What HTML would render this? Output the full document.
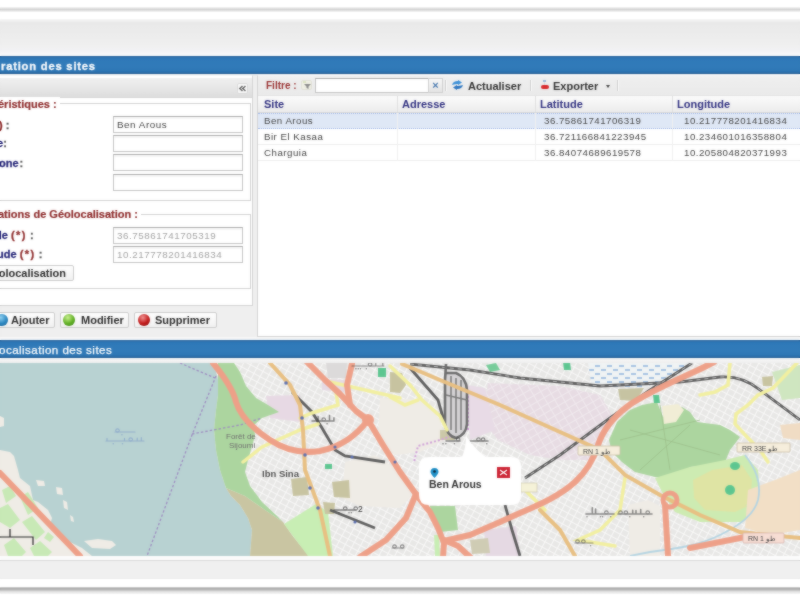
<!DOCTYPE html>
<html><head><meta charset="utf-8">
<style>
*{margin:0;padding:0;box-sizing:border-box}
html,body{width:800px;height:600px;overflow:hidden;background:#fff;font-family:"Liberation Sans",sans-serif;font-size:11px;color:#222}
#root,#root2{position:absolute;left:0;top:0;width:800px;height:600px;overflow:hidden;will-change:transform}
#root2{filter:blur(0.8px);opacity:0.5}
.a{position:absolute;white-space:nowrap}
#topline{left:0;top:7px;width:800px;height:5px;background:linear-gradient(#fbfbfb,#d2d2d2 50%,#fbfbfb)}
#band{left:0;top:19px;width:800px;height:36px;background:linear-gradient(#fbfbfb,#e9e9e9 9%,#ebebeb 30%,#efefef 70%,#f2f2f4 88%,#f8f8fa)}
#win{left:0;top:74px;width:800px;height:266px;background:#efefef}
.bluebar{left:0;width:800px;height:18px;background:linear-gradient(#245f98,#2f79b8 14%,#327bb9 55%,#2e77b5 85%,#205a92);color:#fff}
#t1{top:56px}
#t2{top:340px}
#lp{left:-2px;top:75px;width:255px;height:231px;border:1px solid #d3d3d3;border-top-color:#fbfbfb;background:#fff}
#lph{left:0;top:78px;width:252px;height:20px;background:linear-gradient(#f0f0f0,#e8e8e8 45%,#dddddd);border-bottom:1px solid #d6d6d6}
#coll{left:237px;top:83px;width:11px;height:11px;background:#fafafa;border:1px solid #dadada;border-radius:2px;font-size:11px;font-weight:bold;line-height:9px;text-align:center;color:#666;letter-spacing:-1px}
.fs{border:1px solid #d2d2d2;border-left:none}
.leg{font-weight:bold;color:#8e2c2c;-webkit-text-stroke:0.2px #8e2c2c;background:#fff;padding-right:3px;line-height:14px}
.lbl{font-weight:bold;color:#262678;line-height:14px;-webkit-text-stroke:0.3px currentColor}
.red{color:#8e2c2c}
.col{color:#555}
.inp{left:113px;width:130px;height:17px;border:1px solid #c4c4c4;border-top-color:#acacac;background:linear-gradient(#f4f4f4,#fff 3px);padding-left:3px;font-size:9.8px;letter-spacing:0.55px;line-height:15px;color:#444}
.dis{color:#a2a2a2}
.btn{height:16px;border:1px solid #cccccc;background:linear-gradient(#fefefe,#f1f1f1);border-radius:2px;font-weight:bold;color:#2e2e2e;font-size:11px;line-height:14px}
.ico{position:absolute;border-radius:50%;width:12px;height:12px}
#rp{left:257px;top:75px;width:545px;height:262px;border:1px solid #d3d3d3;border-top-color:#fbfbfb;background:#fff}
#tb{left:258px;top:76px;width:542px;height:19px;background:linear-gradient(#efefef,#eaeaea)}
#gh{left:258px;top:95px;width:542px;height:18px;background:linear-gradient(#fbfbfb,#ececec);border-bottom:1px solid #d8d8d8;border-top:1px solid #e4e4e4}
.gc{top:96px;height:16px;font-weight:bold;color:#303080;line-height:16px}
.sep{top:96px;width:1px;height:16px;background:#e0e0e0}
.row{left:258px;width:542px;height:16px;border-bottom:1px solid #ededed}
.sel{background:#dfe8f6;border-top:1px dotted #a3bae9;border-bottom:1px dotted #a3bae9}
.cell{color:#444;line-height:14px;font-size:9.7px;letter-spacing:0.5px}
.tsep{top:80px;width:2px;height:11px;border-left:1px solid #d0d0d0;border-right:1px solid #fafafa}
.tbt{top:79px;font-weight:bold;color:#333;line-height:14px}
</style></head><body><div id="root">
<div id="topline" class="a"></div>
<div id="band" class="a"></div>
<div class="a" style="left:0;top:54px;width:800px;height:2px;background:#fbfbfb"></div>
<div id="win" class="a"></div>
<div id="t1" class="a bluebar"><span class="a" style="left:1px;top:0.5px;font-weight:bold;font-size:11.2px;letter-spacing:0.8px;line-height:18px;-webkit-text-stroke:0.3px #fff">ration des sites</span></div>

<!-- left panel -->
<div id="lp" class="a"></div>
<div id="lph" class="a"></div>
<div id="coll" class="a"><svg width="9" height="9" style="position:absolute;left:0;top:0"><path d="M4.5,2 L1.8,4.5 L4.5,7 M7.5,2 L4.8,4.5 L7.5,7" fill="none" stroke="#6a6a6a" stroke-width="1.5"/></svg></div>

<div class="a fs" style="left:-2px;top:103px;width:253px;height:98px"></div>
<div class="a leg" style="left:-2px;top:97px">éristiques :</div>
<div class="a lbl" style="left:-1px;top:118px"><span class="red">)</span> <span class="col">:</span></div>
<div class="a lbl" style="left:-3px;top:136px">e<span class="col">:</span></div>
<div class="a lbl" style="left:-1px;top:156px">one<span class="col" style="padding-left:1px">:</span></div>
<div class="a inp" style="top:116px">Ben Arous</div>
<div class="a inp" style="top:135px"></div>
<div class="a inp" style="top:154px"></div>
<div class="a inp" style="top:174px"></div>

<div class="a fs" style="left:-2px;top:214px;width:253px;height:75px"></div>
<div class="a leg" style="left:-2px;top:207px">ations de Géolocalisation :</div>
<div class="a lbl" style="left:-5px;top:228px">de <span class="red" style="letter-spacing:1.5px">(*)</span> <span class="col">:</span></div>
<div class="a lbl" style="left:-3px;top:247px">ude <span class="red" style="letter-spacing:1.5px">(*)</span> <span class="col">:</span></div>
<div class="a inp dis" style="top:227px">36.75861741705319</div>
<div class="a inp dis" style="top:246px">10.217778201416834</div>
<div class="a btn" style="left:-20px;top:265px;width:94px;padding-left:3px;font-size:11px">Géolocalisation</div>

<div class="a btn" style="left:-10px;top:312px;width:65px;padding-left:20px">Ajouter<span class="ico" style="left:5px;top:1px;background:radial-gradient(circle at 40% 30%,#8fd0f0,#2a86c0 55%,#155a8a)"></span></div>
<div class="a btn" style="left:60px;top:312px;width:69px;padding-left:20px">Modifier<span class="ico" style="left:2px;top:1px;background:radial-gradient(circle at 40% 30%,#c8f090,#5fae22 55%,#2f7a10)"></span></div>
<div class="a btn" style="left:134px;top:312px;width:83px;padding-left:20px">Supprimer<span class="ico" style="left:3px;top:1px;background:radial-gradient(circle at 40% 30%,#f09090,#c01818 55%,#7a0808)"></span></div>

<!-- right panel -->
<div id="rp" class="a"></div>
<div id="tb" class="a"></div>
<div class="a" style="left:266px;top:79px;font-weight:bold;font-size:10px;color:#9a3333;line-height:14px">Filtre :</div>
<div class="a" style="left:301px;top:80px;width:11px;height:10px;background:#efefe4;border:1px solid #e2e2d8;border-radius:2px"><svg width="11" height="10" style="position:absolute;left:-1px;top:-1px"><path d="M3,4 L10,4 L7.5,6.5 L7.5,9 L5.5,8 L5.5,6.5 Z" fill="#8a8a8a"/><path d="M2,2 L5,2" stroke="#c8d8a0" stroke-width="1"/></svg></div>
<div class="a inp" style="left:315px;top:78px;width:114px;height:15px;background:#fff"></div>
<div class="a" style="left:428px;top:78px;width:15px;height:15px;background:linear-gradient(#f8f8f8,#e4e4e4);border:1px solid #cfcfcf;color:#4a7ab0;font-size:11px;line-height:12px;text-align:center;font-weight:bold">×</div>
<div class="a tsep" style="left:445px"></div>
<div class="a" style="left:451px;top:80px;width:13px;height:10px"><svg width="13" height="10"><path d="M1,5 Q2,1 7,1 L7,0 L11,2.5 L7,5 L7,4 Q4,4 1,5Z" fill="#3b8fd8"/><path d="M12,5 Q11,9 6,9 L6,10 L2,7.5 L6,5 L6,6 Q9,6 12,5Z" fill="#2a74c0"/></svg></div>
<div class="a tbt" style="left:468px">Actualiser</div>
<div class="a tsep" style="left:530px"></div>
<div class="a" style="left:540px;top:80px;width:9px;height:10px"><div class="a" style="left:3px;top:0;width:3px;height:2px;background:#9ab8d8"></div><div class="a" style="left:4px;top:2px;width:1px;height:3px;background:#ddd"></div><div class="a" style="left:1px;top:5px;width:8px;height:4px;background:#d8282a;border-radius:4px"></div></div>
<div class="a tbt" style="left:553px">Exporter</div>
<div class="a" style="left:606px;top:85px;width:0;height:0;border-left:2.5px solid transparent;border-right:2.5px solid transparent;border-top:3px solid #444"></div>
<div class="a tsep" style="left:617px"></div>

<div id="gh" class="a"></div>
<div class="a gc" style="left:264px">Site</div>
<div class="a sep" style="left:397px"></div>
<div class="a gc" style="left:402px">Adresse</div>
<div class="a sep" style="left:535px"></div>
<div class="a gc" style="left:540px">Latitude</div>
<div class="a sep" style="left:672px"></div>
<div class="a gc" style="left:677px">Longitude</div>

<div class="a row sel" style="top:113px"></div>
<div class="a row" style="top:129px"></div>
<div class="a row" style="top:145px"></div>
<div class="a" style="left:397px;top:113px;width:1px;height:48px;background:#f0f0f0"></div>
<div class="a" style="left:535px;top:113px;width:1px;height:48px;background:#f0f0f0"></div>
<div class="a" style="left:672px;top:113px;width:1px;height:48px;background:#f0f0f0"></div>
<div class="a cell" style="left:264px;top:114px">Ben Arous</div>
<div class="a cell" style="left:544px;top:114px">36.75861741706319</div>
<div class="a cell" style="left:684px;top:114px">10.217778201416834</div>
<div class="a cell" style="left:264px;top:130px">Bir El Kasaa</div>
<div class="a cell" style="left:544px;top:130px">36.721166841223945</div>
<div class="a cell" style="left:684px;top:130px">10.234601016358804</div>
<div class="a cell" style="left:264px;top:146px">Charguia</div>
<div class="a cell" style="left:544px;top:146px">36.84074689619578</div>
<div class="a cell" style="left:684px;top:146px">10.205804820371993</div>

<!-- map -->
<div class="a" style="left:0;top:337px;width:800px;height:3px;background:linear-gradient(#f4f4f4,#fcfcfc)"></div>
<div id="t2" class="a bluebar"><span class="a" style="left:-1px;top:1px;font-size:11.6px;letter-spacing:0.45px;line-height:18px;-webkit-text-stroke:0.25px #fff">ocalisation des sites</span></div>
<div class="a" style="left:0;top:358px;width:800px;height:5px;background:linear-gradient(#f7f7f7,#eeeeee)"></div>
<div id="map" class="a" style="left:0;top:363px;width:800px;height:193px;background:#ebe7e0;overflow:hidden"><svg width="800" height="193" viewBox="0 363 800 193" style="position:absolute;left:0;top:0">
<defs>
<pattern id="grid" patternUnits="userSpaceOnUse" width="7" height="6" patternTransform="rotate(28)">
<rect width="7" height="6" fill="#e8e7e6"/>
<path d="M0 0.5H7M0.5 0V6" stroke="#f8f8f7" stroke-width="1"/>
</pattern>
<pattern id="grid2" patternUnits="userSpaceOnUse" width="8" height="7" patternTransform="rotate(-30)">
<rect width="8" height="7" fill="#e7dce3"/>
<path d="M0 0.5H8M0.5 0V7" stroke="#f0e9ee" stroke-width="1"/>
</pattern>
<pattern id="marsh" patternUnits="userSpaceOnUse" width="12" height="8">
<rect width="12" height="8" fill="#f0f3f4"/>
<path d="M1,2H6M7,6H12" stroke="#8cb2dc" stroke-width="1.5"/>
</pattern>
</defs>
<!-- base residential -->
<rect x="0" y="363" width="800" height="193" fill="url(#grid)"/>
<!-- open land -->
<path fill="#efece6" d="M345,462 L375,455 L395,468 L412,495 L400,508 L360,506 L342,498 Z"/>
<path fill="#efece6" d="M380,398 L425,400 L440,420 L445,440 L420,452 L395,455 L378,440 Z"/>
<path fill="#efece6" d="M628,505 L648,500 L660,506 L660,556 L630,556 Z"/>

<path fill="#efece6" d="M0,440 L30,440 L70,500 L130,540 L130,556 L0,556 Z"/>
<!-- lavender -->
<path fill="url(#grid2)" d="M488,383 L560,386 L600,395 L615,420 L590,460 L560,460 L530,455 L498,440 L482,420 Z"/>
<path fill="#e7d9e4" d="M266,396 L300,395 L302,422 L270,418 Z"/>
<path fill="#e8dbe6" d="M467,385 L485,388 L495,430 L470,440 Z"/>
<path fill="#e5d9e3" d="M484,530 L516,526 L520,556 L486,556 Z"/><path fill="#cfccb4" d="M470,540 L488,538 L490,553 L472,554 Z"/><path fill="#acd59f" d="M430,506 L455,506 L458,530 L440,532 L432,520 Z"/><path fill="#c8eeb4" d="M434,535 L439,535 L440,556 L435,556 Z"/>
<path fill="#dcdada" d="M326,363 L347,363 L346,378 L328,378 Z"/><path fill="#e6dae4" d="M322,379 L345,380 L344,392 L322,390 Z"/>
<path fill="#e5e0e6" d="M700,485 L740,490 L735,515 L700,515 Z"/>
<!-- marsh pattern -->
<path fill="url(#marsh)" d="M588,363 L692,363 L662,380 L646,387 L592,387 Z"/><path fill="#c6c3a2" d="M618,389 L644,388 L636,401 L620,400 Z"/><path fill="#5cc690" d="M563,362 L570,362 L571,370 L564,370 Z"/>
<!-- water -->
<path fill="#b8d2d2" d="M0,363 L214,363 L218,380 L218,395 L216,410 L214,430 L216,450 L220,470 L226,488 L231,496 L240,505 L248,518 L252,530 L250,556 L92,556 L82,548 L70,542 L58,537 L54,532 L50,525 L52,518 L48,510 L38,502 L33,500 L30,486 L20,478 L18,470 L14,456 L10,452 L0,450 Z"/>
<path fill="#efece6" d="M0,416 L4,418 L4,426 L0,427 Z"/>
<path fill="#efece6" d="M84,541 L98,539 L112,541 L116,545 L110,549 L92,548 Z"/>
<path fill="#efece6" d="M36,480 L44,481 L45,486 L38,486 Z"/>
<path fill="#efece6" d="M56,487 L62,488 L63,495 L57,494 Z"/>
<path fill="#efece6" d="M63,500 L67,502 L68,510 L64,508 Z"/>
<path fill="#efece6" d="M70,515 L73,517 L74,522 L71,521 Z"/>
<!-- khaki -->
<path fill="#c9c5a2" d="M226,488 L245,496 L265,510 L283,522 L292,535 L300,545 L310,556 L250,556 L252,530 L248,518 L240,505 L231,496 Z"/>
<path fill="#c7c3a0" d="M390,372 L402,373 L406,385 L400,393 L390,392 Z"/>
<path fill="#c8c4a1" d="M291,479 L307,477 L309,495 L293,496 Z"/>
<path fill="#c8c4a1" d="M332,482 L349,480 L350,498 L334,497 Z"/><path fill="#5cc690" d="M325,464 L332,464 L332,469 L325,469 Z"/>
<path fill="#cbc8a8" d="M440,430 L455,430 L455,440 L440,440 Z"/>
<!-- forest -->
<path fill="#acd59f" d="M218,363 L234,363 L240,372 L246,386 L256,398 L268,405 L279,412 L262,418 L254,425 L255,436 L248,460 L245,472 L250,486 L262,502 L276,515 L283,522 L265,510 L245,496 L226,488 L220,470 L216,450 L214,430 L216,410 L218,395 Z"/>
<path fill="#acd59f" d="M609,440 L617,422 L630,410 L642,405 L657,402 L663,417 L682,407 L690,412 L697,422 L720,425 L730,430 L740,437 L730,450 L725,462 L710,465 L690,467 L675,477 L655,477 L635,472 L622,462 L612,452 Z"/>
<g stroke="#9cbf8a" stroke-width="0.8" fill="none"><path d="M620,440 L700,420 M640,470 L690,425 M630,430 L720,455 M660,405 L670,470"/></g>
<path fill="#f1edd6" d="M662,406 L678,404 L684,410 L676,422 L664,424 Z"/>
<!-- light green park -->
<path fill="#cdebb2" d="M655,478 L690,467 L725,460 L745,455 L758,470 L760,495 L755,515 L740,522 L700,522 L675,512 L662,492 Z"/>
<path fill="#dfe4a4" d="M693,480 L712,470 L742,465 L752,480 L750,505 L735,512 L705,510 L694,498 Z"/>
<ellipse cx="735" cy="466" rx="5" ry="4" fill="#5cc690"/>
<ellipse cx="730" cy="490" rx="5" ry="5" fill="#5cc690"/>
<path fill="#c8eeb4" d="M284,524 L316,504 L328,512 L333,556 L308,556 Z"/><path fill="#c8c4a1" d="M323,502 L335,503 L334,514 L325,514 Z"/>
<path fill="#c8e9b6" d="M2,490 L10,486 L16,496 L6,503 Z M20,497 L28,492 L38,508 L28,515 Z M0,508 L8,504 L20,520 L10,528 L0,522 Z M22,522 L32,516 L45,532 L36,540 Z M4,545 L14,538 L26,552 L22,556 L8,556 Z M30,548 L40,541 L52,552 L48,556 L34,556 Z M48,532 L54,537 L50,542 L44,538 Z"/>
<path fill="#c6e8b2" d="M745,505 L800,480 L800,520 L760,525 Z" opacity="0.5"/>
<path fill="#f2dfc6" d="M748,490 L775,480 L800,470 L800,530 L770,535 L745,528 Z"/>
<path fill="#f0dcc4" d="M780,425 L800,423 L800,440 L783,438 Z"/><path fill="#cfe6c0" d="M772,372 L800,365 L800,398 L782,400 Z"/><path fill="#c8c4a0" d="M762,377 L773,376 L772,386 L763,386 Z"/>
<path fill="#5cc690" d="M378,368 L386,368 L386,377 L378,377 Z"/>
<path fill="#5cc690" d="M653,395 L659,395 L660,403 L654,403 Z"/>
<path fill="#77cc99" d="M486,365 L496,363 L500,370 L490,372 Z"/>
<!-- river -->
<path fill="none" stroke="#b4d4e2" stroke-width="1.8" d="M745,455 C755,468 762,482 758,500 C754,515 740,525 720,535 C700,545 680,548 650,552 L630,556"/>

<!-- purple boundaries -->
<g fill="none" stroke="#9d8cc0" stroke-width="1.3" stroke-dasharray="2.5,2">
<path d="M180,363 L215,378 M216,376 L192,435 L147,556 M192,434 L240,425 L262,418"/>
</g>
<path fill="none" stroke="#d0a0d8" stroke-width="2" stroke-dasharray="2,2" d="M468,392 L468,430 L440,440 L418,446 L414,462"/>
<!-- railways -->
<g fill="none" stroke="#5e5e5e" stroke-width="2.8">
<path d="M410,364 L470,370 L520,378 L600,386 L680,382 L720,377 C735,376 748,380 760,390 L800,420"/>

<path d="M410,368 L438,400 L446,428"/>
<path d="M692,363 L650,390 L610,418 L560,455 L525,478"/>
<path d="M505,505 L512,530 L520,556"/>
<path d="M292,392 L312,412 L322,428 L335,450 L345,456 L385,462"/>
<path d="M330,510 L375,528"/>

</g>
<g fill="none" stroke="#b8b8b8" stroke-width="0.9" stroke-dasharray="4,4">
<path d="M410,364 L470,370 L520,378 L600,386 L680,382 L720,377 C735,376 748,380 760,390 L800,420"/>
<path d="M692,363 L650,390 L610,418 L560,455 L525,478"/>
</g>
<path d="M446,364 L445,380 L445,424 Q447,436 456,438 Q466,435 467,424 L467,390 Q466,377 456,373 L446,373" fill="#d6d4d6" stroke="#6c6c6c" stroke-width="2.6"/>
<path d="M451,376 L451,430 M456,378 L456,433 M461,380 L461,430 M446,395 L467,400" fill="none" stroke="#7c7c7c" stroke-width="1.6"/>
<!-- yellow roads -->
<g fill="none" stroke="#f2efa0" stroke-width="3.5" stroke-linecap="round">
<path d="M243,462 L262,447 L300,430 L318,424"/>
<path d="M330,382 L400,398"/>
<path d="M318,372 L336,392 L338,405 L312,413 L300,418"/>
<path d="M390,366 L410,385 L422,400 L440,416 L447,430"/>
<path d="M390,397 L405,405 L418,400"/>
<path d="M730,363 L728,385 L715,392 L700,395"/>
<path d="M797,363 L773,388 L758,395 L748,405 L736,414 L735,424 L747,437 L760,450 L768,462"/>
<path d="M525,490 L545,510"/>
<path d="M625,478 L620,510 L600,530 L578,540 L615,546"/>

</g>
<!-- tan roads -->
<g fill="none" stroke="#e8bf82" stroke-width="4" stroke-linecap="round">
<path d="M402,364 L440,380 L500,405 L560,432 L600,450 L625,475 L660,495 L700,515 L740,532 L800,538"/>
<path d="M270,363 L290,385 L300,405 L303,430 L305,470 L320,510 L330,556"/>
<path d="M540,510 L560,530 L575,556"/>
</g>
<!-- salmon roads -->
<g fill="none" stroke="#eea088" stroke-width="6" stroke-linecap="round" stroke-linejoin="round">
<path d="M213,363 C222,374 233,388 236,402 C240,416 252,428 270,440 C285,450 300,454 320,451 C340,447 356,436 368,420"/>
<path d="M307,362 L325,380 L340,394 L356,411 L368,420"/>
<path d="M352,364 L347,385 L350,405"/>
<path d="M368,420 L383,445 L400,472 L418,497 L430,512 L438,528 L444,543 L443,557"/>
<path d="M444,540 L458,546 L470,557"/>
<path d="M416,494 L406,518 L386,540 L360,557"/>
<path d="M444,541 L470,535 L500,522 C530,508 555,500 575,482 C590,468 595,455 598,445 C603,430 612,418 628,406 C650,390 690,375 714,362"/>
<path d="M665,505 L668,556"/>
<path d="M690,548 L745,537"/>
<path d="M0,473 L80,556"/>
</g>
<circle cx="368" cy="420" r="6" fill="#eea088"/>
<circle cx="670" cy="500" r="7" fill="none" stroke="#eea088" stroke-width="5"/>
<!-- blue stops -->
<g fill="#5a6fb0">
<circle cx="286" cy="383" r="1.8"/><circle cx="302" cy="418" r="1.8"/><circle cx="305" cy="455" r="1.8"/><circle cx="310" cy="488" r="1.8"/><circle cx="318" cy="508" r="1.8"/>
<circle cx="335" cy="447" r="1.6"/><circle cx="352" cy="457" r="1.6"/><circle cx="355" cy="522" r="1.6"/><circle cx="395" cy="462" r="1.6"/>
</g>
<!-- scale bar -->
<path d="M0,537 L33,537 L33,545 M10,529 L10,537" fill="none" stroke="#222" stroke-width="1.2"/>
<!-- labels -->
<text x="226" y="439" font-family="Liberation Sans" font-size="8" fill="#707070">Forêt de</text>
<text x="229" y="448" font-family="Liberation Sans" font-size="8" fill="#707070">Sijoumi</text>
<text x="262" y="477" font-family="Liberation Sans" font-size="9.5" font-weight="bold" fill="#555">Ibn Sina</text>
<g fill="#f6eedc" stroke="#cbbfa6" stroke-width="0.8">
<rect x="578" y="446" width="42" height="9" rx="1"/>
<rect x="737" y="443" width="53" height="9" rx="1"/>
</g>
<rect x="743" y="533" width="41" height="10" rx="1" fill="#f7ddd4" stroke="#d8b8b0" stroke-width="0.8"/>
<rect x="521" y="483" width="16" height="9" fill="#f5f2d8" stroke="#c8c4a8" stroke-width="0.6"/>
<g font-family="Liberation Sans" font-size="7" fill="#444">
<text x="583" y="453.5">RN 1 طو</text>
<text x="742" y="450.5">RR 33E طو</text>
<text x="748" y="541">RN 1 طو</text>
</g>
<!-- arabic -->
<g opacity="0.6"><path d="M115,432 L135,432" stroke="#7a98c8" stroke-width="1.2" fill="none" stroke-linecap="round"/><ellipse cx="117.5" cy="430.5" rx="1.8" ry="1.6" fill="none" stroke="#7a98c8" stroke-width="1.1"/><circle cx="121.9" cy="434.8" r="0.8" fill="#7a98c8"/></g>
<g opacity="0.6"><path d="M106,441 L144,441 M107.0,441 L107.0,438.4 M124.5,441 L124.5,438.4 M137.2,441 L137.2,438.2 M141.3,441 L141.3,437.6" stroke="#7a98c8" stroke-width="1.2" fill="none" stroke-linecap="round"/><circle cx="113.3" cy="443.8" r="0.8" fill="#7a98c8"/><circle cx="122.5" cy="443.8" r="0.8" fill="#7a98c8"/><ellipse cx="130.7" cy="439.5" rx="1.8" ry="1.6" fill="none" stroke="#7a98c8" stroke-width="1.1"/></g>
<g opacity="0.6"><path d="M312,421.0 L334,421.0 M318.1,421.0 L318.1,416.5 M329.5,421.0 L329.5,415.6 M333.9,421.0 L333.9,417.8" stroke="#3a3a3a" stroke-width="1.5" fill="none" stroke-linecap="round"/><ellipse cx="323.7" cy="419.5" rx="1.8" ry="1.6" fill="none" stroke="#3a3a3a" stroke-width="1.1"/><circle cx="327.1" cy="423.8" r="0.8" fill="#3a3a3a"/></g>
<g opacity="0.6"><path d="M446,441.0 L460,441.0" stroke="#333" stroke-width="1.5" fill="none" stroke-linecap="round"/><circle cx="443.0" cy="443.8" r="0.8" fill="#333"/><circle cx="445.9" cy="443.8" r="0.8" fill="#333"/><circle cx="454.4" cy="443.8" r="0.8" fill="#333"/><ellipse cx="458.1" cy="439.5" rx="1.8" ry="1.6" fill="none" stroke="#333" stroke-width="1.1"/></g>
<g opacity="0.6"><path d="M470,441.0 L488,441.0" stroke="#333" stroke-width="1.5" fill="none" stroke-linecap="round"/><circle cx="471.0" cy="443.8" r="0.8" fill="#333"/><ellipse cx="478.5" cy="439.5" rx="1.8" ry="1.6" fill="none" stroke="#333" stroke-width="1.1"/><ellipse cx="483.1" cy="439.5" rx="1.8" ry="1.6" fill="none" stroke="#333" stroke-width="1.1"/><circle cx="486.8" cy="443.8" r="0.8" fill="#333"/></g>
<g opacity="0.6"><path d="M334,510 L356,510" stroke="#333" stroke-width="1.5" fill="none" stroke-linecap="round"/><circle cx="338.9" cy="512.8" r="0.8" fill="#333"/><ellipse cx="345.2" cy="508.5" rx="1.8" ry="1.6" fill="none" stroke="#333" stroke-width="1.1"/><circle cx="349.0" cy="512.8" r="0.8" fill="#333"/><circle cx="351.3" cy="512.8" r="0.8" fill="#333"/><ellipse cx="355.7" cy="508.5" rx="1.8" ry="1.6" fill="none" stroke="#333" stroke-width="1.1"/></g>
<text x="358" y="512" font-family="Liberation Sans" font-size="8.5" fill="#333">2</text>
<g opacity="0.6"><path d="M586,514 L614,514 M592.3,514 L592.3,507.8 M595.6,514 L595.6,509.1" stroke="#444" stroke-width="1.6" fill="none" stroke-linecap="round"/><circle cx="587.0" cy="516.8" r="0.8" fill="#444"/><circle cx="600.4" cy="516.8" r="0.8" fill="#444"/><circle cx="602.5" cy="516.8" r="0.8" fill="#444"/><ellipse cx="606.4" cy="512.5" rx="1.8" ry="1.6" fill="none" stroke="#444" stroke-width="1.1"/><circle cx="610.7" cy="516.8" r="0.8" fill="#444"/></g>
<g opacity="0.6"><path d="M618,514 L652,514 M632.7,514 L632.7,510.2 M636.0,514 L636.0,510.5 M640.7,514 L640.7,509.6" stroke="#444" stroke-width="1.6" fill="none" stroke-linecap="round"/><ellipse cx="620.5" cy="512.5" rx="1.8" ry="1.6" fill="none" stroke="#444" stroke-width="1.1"/><ellipse cx="625.9" cy="512.5" rx="1.8" ry="1.6" fill="none" stroke="#444" stroke-width="1.1"/><circle cx="629.8" cy="516.8" r="0.8" fill="#444"/><circle cx="643.7" cy="516.8" r="0.8" fill="#444"/><ellipse cx="647.7" cy="512.5" rx="1.8" ry="1.6" fill="none" stroke="#444" stroke-width="1.1"/></g>
<g opacity="0.6"><path d="M352,366 L384,366 M375.8,366 L375.8,362.9 M382.8,366 L382.8,362.8" stroke="#444" stroke-width="1.2" fill="none" stroke-linecap="round"/><circle cx="355.9" cy="368.8" r="0.8" fill="#444"/><circle cx="358.3" cy="368.8" r="0.8" fill="#444"/><circle cx="360.4" cy="368.8" r="0.8" fill="#444"/><circle cx="366.4" cy="368.8" r="0.8" fill="#444"/><ellipse cx="370.1" cy="364.5" rx="1.8" ry="1.6" fill="none" stroke="#444" stroke-width="1.1"/></g>
<g opacity="0.6"><path d="M575,543 L593,543" stroke="#444" stroke-width="1.2" fill="none" stroke-linecap="round"/><ellipse cx="577.5" cy="541.5" rx="1.8" ry="1.6" fill="none" stroke="#444" stroke-width="1.1"/><ellipse cx="583.4" cy="541.5" rx="1.8" ry="1.6" fill="none" stroke="#444" stroke-width="1.1"/><circle cx="590.6" cy="545.8" r="0.8" fill="#444"/></g>
<g opacity="0.6"><path d="M392,548 L404,548" stroke="#444" stroke-width="1.2" fill="none" stroke-linecap="round"/><ellipse cx="394.5" cy="546.5" rx="1.8" ry="1.6" fill="none" stroke="#444" stroke-width="1.1"/><ellipse cx="402.2" cy="546.5" rx="1.8" ry="1.6" fill="none" stroke="#444" stroke-width="1.1"/></g>
<!-- popup -->
<path fill="#fff" d="M429,457 L462,457 C465,450 466,443 466,436 C472,444 478,452 486,457 L511,457 Q521,457 521,467 L521,495 Q521,505 511,505 L429,505 Q419,505 419,495 L419,467 Q419,457 429,457 Z"/>
<path fill="#1e90c8" d="M434.5,468 C431.5,468 430.5,470 430.5,472 C430.5,474 434.5,478 434.5,478 C434.5,478 438.5,474 438.5,472 C438.5,470 437.5,468 434.5,468 Z"/>
<circle cx="434.5" cy="471.5" r="1.3" fill="#123"/>
<rect x="497" y="467" width="13" height="11" fill="#cc2233"/>
<path d="M500,470 L507,475 M507,470 L500,475" stroke="#fff" stroke-width="1.3"/>
<text x="429" y="488" font-family="Liberation Sans" font-size="10.5" font-weight="bold" fill="#333">Ben Arous</text>
</svg>
</div>
<div class="a" style="left:0;top:556px;width:800px;height:4px;background:#fcfcfc"></div>
<div class="a" style="left:0;top:560px;width:800px;height:1px;background:#dadada"></div>
<div class="a" style="left:0;top:561px;width:800px;height:18px;background:#f0f0f0"></div>
<div class="a" style="left:0;top:587px;width:800px;height:7px;background:linear-gradient(#e6e6e6,#a6a6a6 25%,#b8b8b8 40%,#dcdcdc 60%,#fafafa)"></div>
</div><div id="root2">
<div id="topline" class="a"></div>
<div id="band" class="a"></div>
<div class="a" style="left:0;top:54px;width:800px;height:2px;background:#fbfbfb"></div>
<div id="win" class="a"></div>
<div id="t1" class="a bluebar"><span class="a" style="left:1px;top:0.5px;font-weight:bold;font-size:11.2px;letter-spacing:0.8px;line-height:18px;-webkit-text-stroke:0.3px #fff">ration des sites</span></div>

<!-- left panel -->
<div id="lp" class="a"></div>
<div id="lph" class="a"></div>
<div id="coll" class="a"><svg width="9" height="9" style="position:absolute;left:0;top:0"><path d="M4.5,2 L1.8,4.5 L4.5,7 M7.5,2 L4.8,4.5 L7.5,7" fill="none" stroke="#6a6a6a" stroke-width="1.5"/></svg></div>

<div class="a fs" style="left:-2px;top:103px;width:253px;height:98px"></div>
<div class="a leg" style="left:-2px;top:97px">éristiques :</div>
<div class="a lbl" style="left:-1px;top:118px"><span class="red">)</span> <span class="col">:</span></div>
<div class="a lbl" style="left:-3px;top:136px">e<span class="col">:</span></div>
<div class="a lbl" style="left:-1px;top:156px">one<span class="col" style="padding-left:1px">:</span></div>
<div class="a inp" style="top:116px">Ben Arous</div>
<div class="a inp" style="top:135px"></div>
<div class="a inp" style="top:154px"></div>
<div class="a inp" style="top:174px"></div>

<div class="a fs" style="left:-2px;top:214px;width:253px;height:75px"></div>
<div class="a leg" style="left:-2px;top:207px">ations de Géolocalisation :</div>
<div class="a lbl" style="left:-5px;top:228px">de <span class="red" style="letter-spacing:1.5px">(*)</span> <span class="col">:</span></div>
<div class="a lbl" style="left:-3px;top:247px">ude <span class="red" style="letter-spacing:1.5px">(*)</span> <span class="col">:</span></div>
<div class="a inp dis" style="top:227px">36.75861741705319</div>
<div class="a inp dis" style="top:246px">10.217778201416834</div>
<div class="a btn" style="left:-20px;top:265px;width:94px;padding-left:3px;font-size:11px">Géolocalisation</div>

<div class="a btn" style="left:-10px;top:312px;width:65px;padding-left:20px">Ajouter<span class="ico" style="left:5px;top:1px;background:radial-gradient(circle at 40% 30%,#8fd0f0,#2a86c0 55%,#155a8a)"></span></div>
<div class="a btn" style="left:60px;top:312px;width:69px;padding-left:20px">Modifier<span class="ico" style="left:2px;top:1px;background:radial-gradient(circle at 40% 30%,#c8f090,#5fae22 55%,#2f7a10)"></span></div>
<div class="a btn" style="left:134px;top:312px;width:83px;padding-left:20px">Supprimer<span class="ico" style="left:3px;top:1px;background:radial-gradient(circle at 40% 30%,#f09090,#c01818 55%,#7a0808)"></span></div>

<!-- right panel -->
<div id="rp" class="a"></div>
<div id="tb" class="a"></div>
<div class="a" style="left:266px;top:79px;font-weight:bold;font-size:10px;color:#9a3333;line-height:14px">Filtre :</div>
<div class="a" style="left:301px;top:80px;width:11px;height:10px;background:#efefe4;border:1px solid #e2e2d8;border-radius:2px"><svg width="11" height="10" style="position:absolute;left:-1px;top:-1px"><path d="M3,4 L10,4 L7.5,6.5 L7.5,9 L5.5,8 L5.5,6.5 Z" fill="#8a8a8a"/><path d="M2,2 L5,2" stroke="#c8d8a0" stroke-width="1"/></svg></div>
<div class="a inp" style="left:315px;top:78px;width:114px;height:15px;background:#fff"></div>
<div class="a" style="left:428px;top:78px;width:15px;height:15px;background:linear-gradient(#f8f8f8,#e4e4e4);border:1px solid #cfcfcf;color:#4a7ab0;font-size:11px;line-height:12px;text-align:center;font-weight:bold">×</div>
<div class="a tsep" style="left:445px"></div>
<div class="a" style="left:451px;top:80px;width:13px;height:10px"><svg width="13" height="10"><path d="M1,5 Q2,1 7,1 L7,0 L11,2.5 L7,5 L7,4 Q4,4 1,5Z" fill="#3b8fd8"/><path d="M12,5 Q11,9 6,9 L6,10 L2,7.5 L6,5 L6,6 Q9,6 12,5Z" fill="#2a74c0"/></svg></div>
<div class="a tbt" style="left:468px">Actualiser</div>
<div class="a tsep" style="left:530px"></div>
<div class="a" style="left:540px;top:80px;width:9px;height:10px"><div class="a" style="left:3px;top:0;width:3px;height:2px;background:#9ab8d8"></div><div class="a" style="left:4px;top:2px;width:1px;height:3px;background:#ddd"></div><div class="a" style="left:1px;top:5px;width:8px;height:4px;background:#d8282a;border-radius:4px"></div></div>
<div class="a tbt" style="left:553px">Exporter</div>
<div class="a" style="left:606px;top:85px;width:0;height:0;border-left:2.5px solid transparent;border-right:2.5px solid transparent;border-top:3px solid #444"></div>
<div class="a tsep" style="left:617px"></div>

<div id="gh" class="a"></div>
<div class="a gc" style="left:264px">Site</div>
<div class="a sep" style="left:397px"></div>
<div class="a gc" style="left:402px">Adresse</div>
<div class="a sep" style="left:535px"></div>
<div class="a gc" style="left:540px">Latitude</div>
<div class="a sep" style="left:672px"></div>
<div class="a gc" style="left:677px">Longitude</div>

<div class="a row sel" style="top:113px"></div>
<div class="a row" style="top:129px"></div>
<div class="a row" style="top:145px"></div>
<div class="a" style="left:397px;top:113px;width:1px;height:48px;background:#f0f0f0"></div>
<div class="a" style="left:535px;top:113px;width:1px;height:48px;background:#f0f0f0"></div>
<div class="a" style="left:672px;top:113px;width:1px;height:48px;background:#f0f0f0"></div>
<div class="a cell" style="left:264px;top:114px">Ben Arous</div>
<div class="a cell" style="left:544px;top:114px">36.75861741706319</div>
<div class="a cell" style="left:684px;top:114px">10.217778201416834</div>
<div class="a cell" style="left:264px;top:130px">Bir El Kasaa</div>
<div class="a cell" style="left:544px;top:130px">36.721166841223945</div>
<div class="a cell" style="left:684px;top:130px">10.234601016358804</div>
<div class="a cell" style="left:264px;top:146px">Charguia</div>
<div class="a cell" style="left:544px;top:146px">36.84074689619578</div>
<div class="a cell" style="left:684px;top:146px">10.205804820371993</div>

<!-- map -->
<div class="a" style="left:0;top:337px;width:800px;height:3px;background:linear-gradient(#f4f4f4,#fcfcfc)"></div>
<div id="t2" class="a bluebar"><span class="a" style="left:-1px;top:1px;font-size:11.6px;letter-spacing:0.45px;line-height:18px;-webkit-text-stroke:0.25px #fff">ocalisation des sites</span></div>
<div class="a" style="left:0;top:358px;width:800px;height:5px;background:linear-gradient(#f7f7f7,#eeeeee)"></div>
<div id="map" class="a" style="left:0;top:363px;width:800px;height:193px;background:#ebe7e0;overflow:hidden"><svg width="800" height="193" viewBox="0 363 800 193" style="position:absolute;left:0;top:0">
<defs>
<pattern id="grid" patternUnits="userSpaceOnUse" width="7" height="6" patternTransform="rotate(28)">
<rect width="7" height="6" fill="#e8e7e6"/>
<path d="M0 0.5H7M0.5 0V6" stroke="#f8f8f7" stroke-width="1"/>
</pattern>
<pattern id="grid2" patternUnits="userSpaceOnUse" width="8" height="7" patternTransform="rotate(-30)">
<rect width="8" height="7" fill="#e7dce3"/>
<path d="M0 0.5H8M0.5 0V7" stroke="#f0e9ee" stroke-width="1"/>
</pattern>
<pattern id="marsh" patternUnits="userSpaceOnUse" width="12" height="8">
<rect width="12" height="8" fill="#f0f3f4"/>
<path d="M1,2H6M7,6H12" stroke="#8cb2dc" stroke-width="1.5"/>
</pattern>
</defs>
<!-- base residential -->
<rect x="0" y="363" width="800" height="193" fill="url(#grid)"/>
<!-- open land -->
<path fill="#efece6" d="M345,462 L375,455 L395,468 L412,495 L400,508 L360,506 L342,498 Z"/>
<path fill="#efece6" d="M380,398 L425,400 L440,420 L445,440 L420,452 L395,455 L378,440 Z"/>
<path fill="#efece6" d="M628,505 L648,500 L660,506 L660,556 L630,556 Z"/>

<path fill="#efece6" d="M0,440 L30,440 L70,500 L130,540 L130,556 L0,556 Z"/>
<!-- lavender -->
<path fill="url(#grid2)" d="M488,383 L560,386 L600,395 L615,420 L590,460 L560,460 L530,455 L498,440 L482,420 Z"/>
<path fill="#e7d9e4" d="M266,396 L300,395 L302,422 L270,418 Z"/>
<path fill="#e8dbe6" d="M467,385 L485,388 L495,430 L470,440 Z"/>
<path fill="#e5d9e3" d="M484,530 L516,526 L520,556 L486,556 Z"/><path fill="#cfccb4" d="M470,540 L488,538 L490,553 L472,554 Z"/><path fill="#acd59f" d="M430,506 L455,506 L458,530 L440,532 L432,520 Z"/><path fill="#c8eeb4" d="M434,535 L439,535 L440,556 L435,556 Z"/>
<path fill="#dcdada" d="M326,363 L347,363 L346,378 L328,378 Z"/><path fill="#e6dae4" d="M322,379 L345,380 L344,392 L322,390 Z"/>
<path fill="#e5e0e6" d="M700,485 L740,490 L735,515 L700,515 Z"/>
<!-- marsh pattern -->
<path fill="url(#marsh)" d="M588,363 L692,363 L662,380 L646,387 L592,387 Z"/><path fill="#c6c3a2" d="M618,389 L644,388 L636,401 L620,400 Z"/><path fill="#5cc690" d="M563,362 L570,362 L571,370 L564,370 Z"/>
<!-- water -->
<path fill="#b8d2d2" d="M0,363 L214,363 L218,380 L218,395 L216,410 L214,430 L216,450 L220,470 L226,488 L231,496 L240,505 L248,518 L252,530 L250,556 L92,556 L82,548 L70,542 L58,537 L54,532 L50,525 L52,518 L48,510 L38,502 L33,500 L30,486 L20,478 L18,470 L14,456 L10,452 L0,450 Z"/>
<path fill="#efece6" d="M0,416 L4,418 L4,426 L0,427 Z"/>
<path fill="#efece6" d="M84,541 L98,539 L112,541 L116,545 L110,549 L92,548 Z"/>
<path fill="#efece6" d="M36,480 L44,481 L45,486 L38,486 Z"/>
<path fill="#efece6" d="M56,487 L62,488 L63,495 L57,494 Z"/>
<path fill="#efece6" d="M63,500 L67,502 L68,510 L64,508 Z"/>
<path fill="#efece6" d="M70,515 L73,517 L74,522 L71,521 Z"/>
<!-- khaki -->
<path fill="#c9c5a2" d="M226,488 L245,496 L265,510 L283,522 L292,535 L300,545 L310,556 L250,556 L252,530 L248,518 L240,505 L231,496 Z"/>
<path fill="#c7c3a0" d="M390,372 L402,373 L406,385 L400,393 L390,392 Z"/>
<path fill="#c8c4a1" d="M291,479 L307,477 L309,495 L293,496 Z"/>
<path fill="#c8c4a1" d="M332,482 L349,480 L350,498 L334,497 Z"/><path fill="#5cc690" d="M325,464 L332,464 L332,469 L325,469 Z"/>
<path fill="#cbc8a8" d="M440,430 L455,430 L455,440 L440,440 Z"/>
<!-- forest -->
<path fill="#acd59f" d="M218,363 L234,363 L240,372 L246,386 L256,398 L268,405 L279,412 L262,418 L254,425 L255,436 L248,460 L245,472 L250,486 L262,502 L276,515 L283,522 L265,510 L245,496 L226,488 L220,470 L216,450 L214,430 L216,410 L218,395 Z"/>
<path fill="#acd59f" d="M609,440 L617,422 L630,410 L642,405 L657,402 L663,417 L682,407 L690,412 L697,422 L720,425 L730,430 L740,437 L730,450 L725,462 L710,465 L690,467 L675,477 L655,477 L635,472 L622,462 L612,452 Z"/>
<g stroke="#9cbf8a" stroke-width="0.8" fill="none"><path d="M620,440 L700,420 M640,470 L690,425 M630,430 L720,455 M660,405 L670,470"/></g>
<path fill="#f1edd6" d="M662,406 L678,404 L684,410 L676,422 L664,424 Z"/>
<!-- light green park -->
<path fill="#cdebb2" d="M655,478 L690,467 L725,460 L745,455 L758,470 L760,495 L755,515 L740,522 L700,522 L675,512 L662,492 Z"/>
<path fill="#dfe4a4" d="M693,480 L712,470 L742,465 L752,480 L750,505 L735,512 L705,510 L694,498 Z"/>
<ellipse cx="735" cy="466" rx="5" ry="4" fill="#5cc690"/>
<ellipse cx="730" cy="490" rx="5" ry="5" fill="#5cc690"/>
<path fill="#c8eeb4" d="M284,524 L316,504 L328,512 L333,556 L308,556 Z"/><path fill="#c8c4a1" d="M323,502 L335,503 L334,514 L325,514 Z"/>
<path fill="#c8e9b6" d="M2,490 L10,486 L16,496 L6,503 Z M20,497 L28,492 L38,508 L28,515 Z M0,508 L8,504 L20,520 L10,528 L0,522 Z M22,522 L32,516 L45,532 L36,540 Z M4,545 L14,538 L26,552 L22,556 L8,556 Z M30,548 L40,541 L52,552 L48,556 L34,556 Z M48,532 L54,537 L50,542 L44,538 Z"/>
<path fill="#c6e8b2" d="M745,505 L800,480 L800,520 L760,525 Z" opacity="0.5"/>
<path fill="#f2dfc6" d="M748,490 L775,480 L800,470 L800,530 L770,535 L745,528 Z"/>
<path fill="#f0dcc4" d="M780,425 L800,423 L800,440 L783,438 Z"/><path fill="#cfe6c0" d="M772,372 L800,365 L800,398 L782,400 Z"/><path fill="#c8c4a0" d="M762,377 L773,376 L772,386 L763,386 Z"/>
<path fill="#5cc690" d="M378,368 L386,368 L386,377 L378,377 Z"/>
<path fill="#5cc690" d="M653,395 L659,395 L660,403 L654,403 Z"/>
<path fill="#77cc99" d="M486,365 L496,363 L500,370 L490,372 Z"/>
<!-- river -->
<path fill="none" stroke="#b4d4e2" stroke-width="1.8" d="M745,455 C755,468 762,482 758,500 C754,515 740,525 720,535 C700,545 680,548 650,552 L630,556"/>

<!-- purple boundaries -->
<g fill="none" stroke="#9d8cc0" stroke-width="1.3" stroke-dasharray="2.5,2">
<path d="M180,363 L215,378 M216,376 L192,435 L147,556 M192,434 L240,425 L262,418"/>
</g>
<path fill="none" stroke="#d0a0d8" stroke-width="2" stroke-dasharray="2,2" d="M468,392 L468,430 L440,440 L418,446 L414,462"/>
<!-- railways -->
<g fill="none" stroke="#5e5e5e" stroke-width="2.8">
<path d="M410,364 L470,370 L520,378 L600,386 L680,382 L720,377 C735,376 748,380 760,390 L800,420"/>

<path d="M410,368 L438,400 L446,428"/>
<path d="M692,363 L650,390 L610,418 L560,455 L525,478"/>
<path d="M505,505 L512,530 L520,556"/>
<path d="M292,392 L312,412 L322,428 L335,450 L345,456 L385,462"/>
<path d="M330,510 L375,528"/>

</g>
<g fill="none" stroke="#b8b8b8" stroke-width="0.9" stroke-dasharray="4,4">
<path d="M410,364 L470,370 L520,378 L600,386 L680,382 L720,377 C735,376 748,380 760,390 L800,420"/>
<path d="M692,363 L650,390 L610,418 L560,455 L525,478"/>
</g>
<path d="M446,364 L445,380 L445,424 Q447,436 456,438 Q466,435 467,424 L467,390 Q466,377 456,373 L446,373" fill="#d6d4d6" stroke="#6c6c6c" stroke-width="2.6"/>
<path d="M451,376 L451,430 M456,378 L456,433 M461,380 L461,430 M446,395 L467,400" fill="none" stroke="#7c7c7c" stroke-width="1.6"/>
<!-- yellow roads -->
<g fill="none" stroke="#f2efa0" stroke-width="3.5" stroke-linecap="round">
<path d="M243,462 L262,447 L300,430 L318,424"/>
<path d="M330,382 L400,398"/>
<path d="M318,372 L336,392 L338,405 L312,413 L300,418"/>
<path d="M390,366 L410,385 L422,400 L440,416 L447,430"/>
<path d="M390,397 L405,405 L418,400"/>
<path d="M730,363 L728,385 L715,392 L700,395"/>
<path d="M797,363 L773,388 L758,395 L748,405 L736,414 L735,424 L747,437 L760,450 L768,462"/>
<path d="M525,490 L545,510"/>
<path d="M625,478 L620,510 L600,530 L578,540 L615,546"/>

</g>
<!-- tan roads -->
<g fill="none" stroke="#e8bf82" stroke-width="4" stroke-linecap="round">
<path d="M402,364 L440,380 L500,405 L560,432 L600,450 L625,475 L660,495 L700,515 L740,532 L800,538"/>
<path d="M270,363 L290,385 L300,405 L303,430 L305,470 L320,510 L330,556"/>
<path d="M540,510 L560,530 L575,556"/>
</g>
<!-- salmon roads -->
<g fill="none" stroke="#eea088" stroke-width="6" stroke-linecap="round" stroke-linejoin="round">
<path d="M213,363 C222,374 233,388 236,402 C240,416 252,428 270,440 C285,450 300,454 320,451 C340,447 356,436 368,420"/>
<path d="M307,362 L325,380 L340,394 L356,411 L368,420"/>
<path d="M352,364 L347,385 L350,405"/>
<path d="M368,420 L383,445 L400,472 L418,497 L430,512 L438,528 L444,543 L443,557"/>
<path d="M444,540 L458,546 L470,557"/>
<path d="M416,494 L406,518 L386,540 L360,557"/>
<path d="M444,541 L470,535 L500,522 C530,508 555,500 575,482 C590,468 595,455 598,445 C603,430 612,418 628,406 C650,390 690,375 714,362"/>
<path d="M665,505 L668,556"/>
<path d="M690,548 L745,537"/>
<path d="M0,473 L80,556"/>
</g>
<circle cx="368" cy="420" r="6" fill="#eea088"/>
<circle cx="670" cy="500" r="7" fill="none" stroke="#eea088" stroke-width="5"/>
<!-- blue stops -->
<g fill="#5a6fb0">
<circle cx="286" cy="383" r="1.8"/><circle cx="302" cy="418" r="1.8"/><circle cx="305" cy="455" r="1.8"/><circle cx="310" cy="488" r="1.8"/><circle cx="318" cy="508" r="1.8"/>
<circle cx="335" cy="447" r="1.6"/><circle cx="352" cy="457" r="1.6"/><circle cx="355" cy="522" r="1.6"/><circle cx="395" cy="462" r="1.6"/>
</g>
<!-- scale bar -->
<path d="M0,537 L33,537 L33,545 M10,529 L10,537" fill="none" stroke="#222" stroke-width="1.2"/>
<!-- labels -->
<text x="226" y="439" font-family="Liberation Sans" font-size="8" fill="#707070">Forêt de</text>
<text x="229" y="448" font-family="Liberation Sans" font-size="8" fill="#707070">Sijoumi</text>
<text x="262" y="477" font-family="Liberation Sans" font-size="9.5" font-weight="bold" fill="#555">Ibn Sina</text>
<g fill="#f6eedc" stroke="#cbbfa6" stroke-width="0.8">
<rect x="578" y="446" width="42" height="9" rx="1"/>
<rect x="737" y="443" width="53" height="9" rx="1"/>
</g>
<rect x="743" y="533" width="41" height="10" rx="1" fill="#f7ddd4" stroke="#d8b8b0" stroke-width="0.8"/>
<rect x="521" y="483" width="16" height="9" fill="#f5f2d8" stroke="#c8c4a8" stroke-width="0.6"/>
<g font-family="Liberation Sans" font-size="7" fill="#444">
<text x="583" y="453.5">RN 1 طو</text>
<text x="742" y="450.5">RR 33E طو</text>
<text x="748" y="541">RN 1 طو</text>
</g>
<!-- arabic -->
<g opacity="0.6"><path d="M115,432 L135,432" stroke="#7a98c8" stroke-width="1.2" fill="none" stroke-linecap="round"/><ellipse cx="117.5" cy="430.5" rx="1.8" ry="1.6" fill="none" stroke="#7a98c8" stroke-width="1.1"/><circle cx="121.9" cy="434.8" r="0.8" fill="#7a98c8"/></g>
<g opacity="0.6"><path d="M106,441 L144,441 M107.0,441 L107.0,438.4 M124.5,441 L124.5,438.4 M137.2,441 L137.2,438.2 M141.3,441 L141.3,437.6" stroke="#7a98c8" stroke-width="1.2" fill="none" stroke-linecap="round"/><circle cx="113.3" cy="443.8" r="0.8" fill="#7a98c8"/><circle cx="122.5" cy="443.8" r="0.8" fill="#7a98c8"/><ellipse cx="130.7" cy="439.5" rx="1.8" ry="1.6" fill="none" stroke="#7a98c8" stroke-width="1.1"/></g>
<g opacity="0.6"><path d="M312,421.0 L334,421.0 M318.1,421.0 L318.1,416.5 M329.5,421.0 L329.5,415.6 M333.9,421.0 L333.9,417.8" stroke="#3a3a3a" stroke-width="1.5" fill="none" stroke-linecap="round"/><ellipse cx="323.7" cy="419.5" rx="1.8" ry="1.6" fill="none" stroke="#3a3a3a" stroke-width="1.1"/><circle cx="327.1" cy="423.8" r="0.8" fill="#3a3a3a"/></g>
<g opacity="0.6"><path d="M446,441.0 L460,441.0" stroke="#333" stroke-width="1.5" fill="none" stroke-linecap="round"/><circle cx="443.0" cy="443.8" r="0.8" fill="#333"/><circle cx="445.9" cy="443.8" r="0.8" fill="#333"/><circle cx="454.4" cy="443.8" r="0.8" fill="#333"/><ellipse cx="458.1" cy="439.5" rx="1.8" ry="1.6" fill="none" stroke="#333" stroke-width="1.1"/></g>
<g opacity="0.6"><path d="M470,441.0 L488,441.0" stroke="#333" stroke-width="1.5" fill="none" stroke-linecap="round"/><circle cx="471.0" cy="443.8" r="0.8" fill="#333"/><ellipse cx="478.5" cy="439.5" rx="1.8" ry="1.6" fill="none" stroke="#333" stroke-width="1.1"/><ellipse cx="483.1" cy="439.5" rx="1.8" ry="1.6" fill="none" stroke="#333" stroke-width="1.1"/><circle cx="486.8" cy="443.8" r="0.8" fill="#333"/></g>
<g opacity="0.6"><path d="M334,510 L356,510" stroke="#333" stroke-width="1.5" fill="none" stroke-linecap="round"/><circle cx="338.9" cy="512.8" r="0.8" fill="#333"/><ellipse cx="345.2" cy="508.5" rx="1.8" ry="1.6" fill="none" stroke="#333" stroke-width="1.1"/><circle cx="349.0" cy="512.8" r="0.8" fill="#333"/><circle cx="351.3" cy="512.8" r="0.8" fill="#333"/><ellipse cx="355.7" cy="508.5" rx="1.8" ry="1.6" fill="none" stroke="#333" stroke-width="1.1"/></g>
<text x="358" y="512" font-family="Liberation Sans" font-size="8.5" fill="#333">2</text>
<g opacity="0.6"><path d="M586,514 L614,514 M592.3,514 L592.3,507.8 M595.6,514 L595.6,509.1" stroke="#444" stroke-width="1.6" fill="none" stroke-linecap="round"/><circle cx="587.0" cy="516.8" r="0.8" fill="#444"/><circle cx="600.4" cy="516.8" r="0.8" fill="#444"/><circle cx="602.5" cy="516.8" r="0.8" fill="#444"/><ellipse cx="606.4" cy="512.5" rx="1.8" ry="1.6" fill="none" stroke="#444" stroke-width="1.1"/><circle cx="610.7" cy="516.8" r="0.8" fill="#444"/></g>
<g opacity="0.6"><path d="M618,514 L652,514 M632.7,514 L632.7,510.2 M636.0,514 L636.0,510.5 M640.7,514 L640.7,509.6" stroke="#444" stroke-width="1.6" fill="none" stroke-linecap="round"/><ellipse cx="620.5" cy="512.5" rx="1.8" ry="1.6" fill="none" stroke="#444" stroke-width="1.1"/><ellipse cx="625.9" cy="512.5" rx="1.8" ry="1.6" fill="none" stroke="#444" stroke-width="1.1"/><circle cx="629.8" cy="516.8" r="0.8" fill="#444"/><circle cx="643.7" cy="516.8" r="0.8" fill="#444"/><ellipse cx="647.7" cy="512.5" rx="1.8" ry="1.6" fill="none" stroke="#444" stroke-width="1.1"/></g>
<g opacity="0.6"><path d="M352,366 L384,366 M375.8,366 L375.8,362.9 M382.8,366 L382.8,362.8" stroke="#444" stroke-width="1.2" fill="none" stroke-linecap="round"/><circle cx="355.9" cy="368.8" r="0.8" fill="#444"/><circle cx="358.3" cy="368.8" r="0.8" fill="#444"/><circle cx="360.4" cy="368.8" r="0.8" fill="#444"/><circle cx="366.4" cy="368.8" r="0.8" fill="#444"/><ellipse cx="370.1" cy="364.5" rx="1.8" ry="1.6" fill="none" stroke="#444" stroke-width="1.1"/></g>
<g opacity="0.6"><path d="M575,543 L593,543" stroke="#444" stroke-width="1.2" fill="none" stroke-linecap="round"/><ellipse cx="577.5" cy="541.5" rx="1.8" ry="1.6" fill="none" stroke="#444" stroke-width="1.1"/><ellipse cx="583.4" cy="541.5" rx="1.8" ry="1.6" fill="none" stroke="#444" stroke-width="1.1"/><circle cx="590.6" cy="545.8" r="0.8" fill="#444"/></g>
<g opacity="0.6"><path d="M392,548 L404,548" stroke="#444" stroke-width="1.2" fill="none" stroke-linecap="round"/><ellipse cx="394.5" cy="546.5" rx="1.8" ry="1.6" fill="none" stroke="#444" stroke-width="1.1"/><ellipse cx="402.2" cy="546.5" rx="1.8" ry="1.6" fill="none" stroke="#444" stroke-width="1.1"/></g>
<!-- popup -->
<path fill="#fff" d="M429,457 L462,457 C465,450 466,443 466,436 C472,444 478,452 486,457 L511,457 Q521,457 521,467 L521,495 Q521,505 511,505 L429,505 Q419,505 419,495 L419,467 Q419,457 429,457 Z"/>
<path fill="#1e90c8" d="M434.5,468 C431.5,468 430.5,470 430.5,472 C430.5,474 434.5,478 434.5,478 C434.5,478 438.5,474 438.5,472 C438.5,470 437.5,468 434.5,468 Z"/>
<circle cx="434.5" cy="471.5" r="1.3" fill="#123"/>
<rect x="497" y="467" width="13" height="11" fill="#cc2233"/>
<path d="M500,470 L507,475 M507,470 L500,475" stroke="#fff" stroke-width="1.3"/>
<text x="429" y="488" font-family="Liberation Sans" font-size="10.5" font-weight="bold" fill="#333">Ben Arous</text>
</svg>
</div>
<div class="a" style="left:0;top:556px;width:800px;height:4px;background:#fcfcfc"></div>
<div class="a" style="left:0;top:560px;width:800px;height:1px;background:#dadada"></div>
<div class="a" style="left:0;top:561px;width:800px;height:18px;background:#f0f0f0"></div>
<div class="a" style="left:0;top:587px;width:800px;height:7px;background:linear-gradient(#e6e6e6,#a6a6a6 25%,#b8b8b8 40%,#dcdcdc 60%,#fafafa)"></div>
</div></body></html>
